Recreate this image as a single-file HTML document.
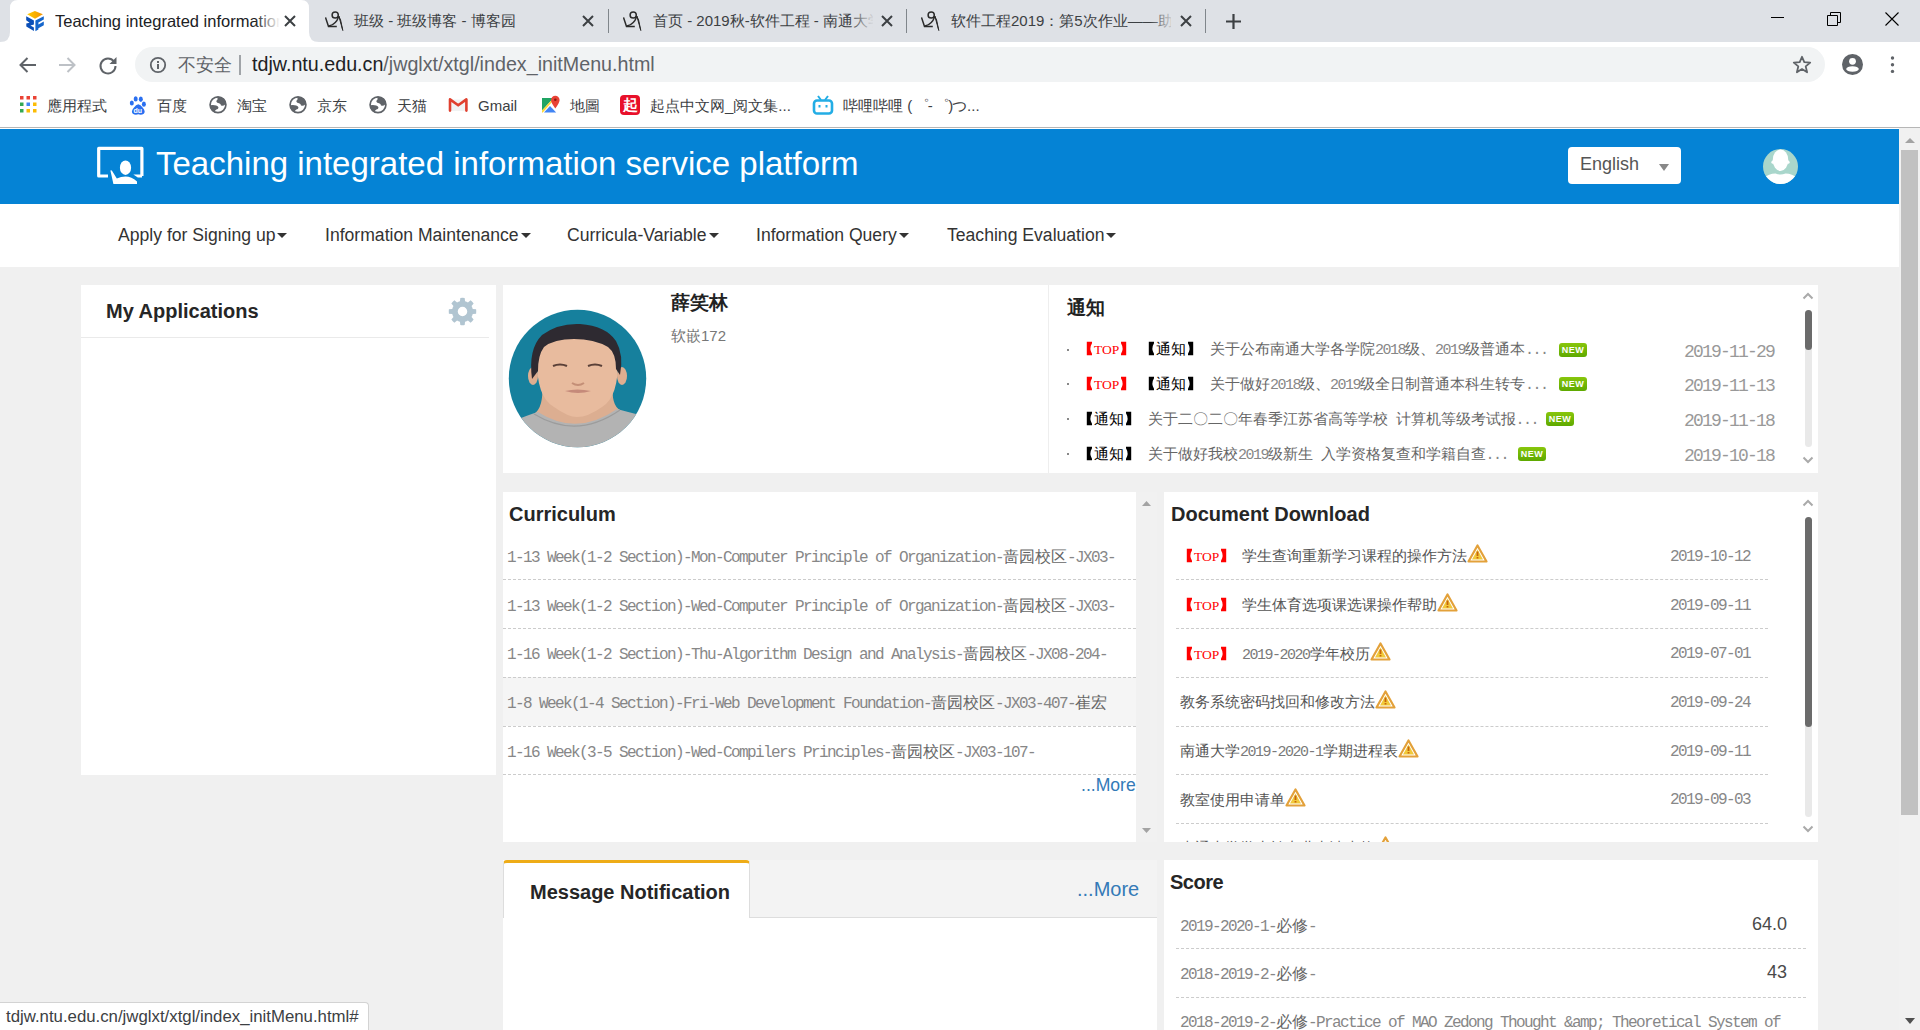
<!DOCTYPE html>
<html><head><meta charset="utf-8">
<style>
*{box-sizing:border-box;margin:0;padding:0}
html,body{width:1920px;height:1030px;overflow:hidden;background:#fff;font-family:"Liberation Sans",sans-serif}
.a{position:absolute;white-space:nowrap}
#tabbar{position:absolute;left:0;top:0;width:1920px;height:42px;background:#dee1e6}
#toolbar{position:absolute;left:0;top:42px;width:1920px;height:44px;background:#fff}
#bmbar{position:absolute;left:0;top:86px;width:1920px;height:41px;background:#fff}
#sep{position:absolute;left:0;top:127px;width:1920px;height:1px;background:#b6b6b6}
#content{position:absolute;left:0;top:128px;width:1920px;height:902px;background:#f0f0f0;overflow:hidden}
.tabt{font-size:15px;color:#3c4043;top:12px}
.bmt{font-size:15px;color:#3c4043;top:11px}
.card{position:absolute;background:#fff}
.ttl{position:absolute;font-weight:bold;font-size:20px;color:#262626;white-space:nowrap}
.mono{font-family:"Liberation Mono",monospace}
.dash{position:absolute;height:1px;border-top:1px dashed #ccc}
.nav{top:97px;font-size:17.6px;color:#333}
.car{display:inline-block;width:0;height:0;border-left:5px solid transparent;border-right:5px solid transparent;border-top:5px solid #333;vertical-align:middle;margin-left:2px;margin-top:-1px}
.ss{font-size:15px;line-height:15px}
.ss16{font-size:16px;line-height:16px}
.h{font-family:"Liberation Mono",monospace;letter-spacing:-0.1em}
.red{color:#f00}.blk{color:#000}
.newb{width:28px;height:14px;border-radius:3px;background:linear-gradient(#88c60c,#5ea900);color:#fff;font-size:9px;line-height:14px;font-weight:bold;text-align:center;letter-spacing:0.5px}
.warn{display:inline-block;width:21px;height:19px;vertical-align:top;margin-top:-4px}
.br{display:inline-block;vertical-align:top;fill:currentColor}
.tp{font-family:"Liberation Serif",serif;font-size:13.5px;letter-spacing:0px}
.ss .h,.ss16 .h{opacity:.78}
</style></head><body>

<div id="tabbar">
 <svg class="a" style="left:0;top:0" width="330" height="42">
  <path d="M0 42 Q10 42 10 32 L10 8 Q10 0 18 0 L301 0 Q309 0 309 8 L309 32 Q309 42 319 42 Z" fill="#fff"/>
 </svg>
 <svg class="a" style="left:20px;top:6px" width="32" height="30" viewBox="0 0 32 30">
  <defs><linearGradient id="fy" x1="0" x2="1"><stop offset="0" stop-color="#ffcc00"/><stop offset="1" stop-color="#f39200"/></linearGradient></defs>
  <path d="M7.2 8.3 L14.9 5 L22.9 8.3 L15 12.8 Z" fill="url(#fy)"/>
  <path d="M6.2 10.2 L13.9 14.4 L13.9 18.5 L10.4 19.6 L13.9 21.6 L13.9 25 L6.3 20.6 L6.3 17.6 L9.6 16.8 L6.2 14.2 Z" fill="#0a4fb8"/>
  <path d="M15.4 14.6 L23.8 10.2 L23.8 13.6 L18.4 16.6 L18.4 18.6 L23.8 15.6 L23.8 19.2 L18.4 22.2 L18.4 23.6 L15.4 25.2 Z" fill="#1566cc"/>
 </svg>
 <div class="a tabt" style="left:55px;width:225px;overflow:hidden;color:#202124;font-size:16.5px;top:12px">Teaching integrated information service platform</div>
 <div class="a" style="left:255px;top:8px;width:25px;height:28px;background:linear-gradient(to right,rgba(255,255,255,0),#fff)"></div>
 <svg class="a" style="left:283px;top:14px" width="14" height="14"><path d="M2 2 L12 12 M12 2 L2 12" stroke="#3c4043" stroke-width="2"/></svg>

 <svg class="a cnb" style="left:325px;top:11px" width="20" height="20" viewBox="0 0 20 20"><circle cx="10.2" cy="4" r="3.1" stroke="#2b2b2b" stroke-width="1.5" fill="none"/><path d="M0.5 6.4 L3.5 15.6 L11.8 15.5" stroke="#2b2b2b" stroke-width="1.5" fill="none"/><path d="M4 15 Q11 13.5 13.8 5.5" stroke="#2b2b2b" stroke-width="1.4" fill="none"/><path d="M13.8 5 L17.8 19.5 L15.6 9 Z" fill="#2b2b2b" stroke="#2b2b2b" stroke-width="1"/></svg>
 <div class="a tabt" style="left:354px">班级 - 班级博客 - 博客园</div>
 <svg class="a" style="left:581px;top:14px" width="14" height="14"><path d="M2 2 L12 12 M12 2 L2 12" stroke="#3c4043" stroke-width="2"/></svg>
 <div class="a" style="left:608px;top:9px;width:1px;height:24px;background:#80868b"></div>

 <svg class="a cnb" style="left:623px;top:11px" width="20" height="20" viewBox="0 0 20 20"><circle cx="10.2" cy="4" r="3.1" stroke="#2b2b2b" stroke-width="1.5" fill="none"/><path d="M0.5 6.4 L3.5 15.6 L11.8 15.5" stroke="#2b2b2b" stroke-width="1.5" fill="none"/><path d="M4 15 Q11 13.5 13.8 5.5" stroke="#2b2b2b" stroke-width="1.4" fill="none"/><path d="M13.8 5 L17.8 19.5 L15.6 9 Z" fill="#2b2b2b" stroke="#2b2b2b" stroke-width="1"/></svg>
 <div class="a tabt" style="left:653px;width:220px;overflow:hidden">首页 - 2019秋-软件工程 - 南通大学</div>
 <div class="a" style="left:850px;top:8px;width:25px;height:28px;background:linear-gradient(to right,rgba(222,225,230,0),#dee1e6)"></div>
 <svg class="a" style="left:880px;top:14px" width="14" height="14"><path d="M2 2 L12 12 M12 2 L2 12" stroke="#3c4043" stroke-width="2"/></svg>
 <div class="a" style="left:906px;top:9px;width:1px;height:24px;background:#80868b"></div>

 <svg class="a cnb" style="left:921px;top:11px" width="20" height="20" viewBox="0 0 20 20"><circle cx="10.2" cy="4" r="3.1" stroke="#2b2b2b" stroke-width="1.5" fill="none"/><path d="M0.5 6.4 L3.5 15.6 L11.8 15.5" stroke="#2b2b2b" stroke-width="1.5" fill="none"/><path d="M4 15 Q11 13.5 13.8 5.5" stroke="#2b2b2b" stroke-width="1.4" fill="none"/><path d="M13.8 5 L17.8 19.5 L15.6 9 Z" fill="#2b2b2b" stroke="#2b2b2b" stroke-width="1"/></svg>
 <div class="a tabt" style="left:951px;width:220px;overflow:hidden">软件工程2019：第5次作业——助教</div>
 <div class="a" style="left:1150px;top:8px;width:25px;height:28px;background:linear-gradient(to right,rgba(222,225,230,0),#dee1e6)"></div>
 <svg class="a" style="left:1179px;top:14px" width="14" height="14"><path d="M2 2 L12 12 M12 2 L2 12" stroke="#3c4043" stroke-width="2"/></svg>
 <div class="a" style="left:1205px;top:9px;width:1px;height:24px;background:#80868b"></div>
 <svg class="a" style="left:1225px;top:13px" width="17" height="17"><path d="M8.5 1 V16 M1 8.5 H16" stroke="#3c4043" stroke-width="2.2"/></svg>

 <div class="a" style="left:1771px;top:17px;width:13px;height:1px;background:#000"></div>
 <svg class="a" style="left:1826px;top:11px" width="16" height="16"><path d="M1.5 4.5 H11.5 V14.5 H1.5 Z M4.5 4.5 V1.5 H14.5 V11.5 H11.5" stroke="#000" stroke-width="1" fill="none"/></svg>
 <svg class="a" style="left:1884px;top:11px" width="16" height="16"><path d="M1.5 1.5 L14.5 14.5 M14.5 1.5 L1.5 14.5" stroke="#000" stroke-width="1.1"/></svg>
</div>
<div id="toolbar">
 <svg class="a" style="left:18px;top:14px" width="20" height="18"><path d="M18 9 H3 M9.5 2 L2.5 9 L9.5 16" stroke="#5f6368" stroke-width="2" fill="none"/></svg>
 <svg class="a" style="left:58px;top:14px" width="20" height="18"><path d="M1 9 H16 M9.5 2 L16.5 9 L9.5 16" stroke="#bdc1c6" stroke-width="2" fill="none"/></svg>
 <svg class="a" style="left:97px;top:12px" width="22" height="22"><path d="M17 7.5 A7.5 7.5 0 1 0 18.5 12" stroke="#5f6368" stroke-width="2" fill="none"/><path d="M19.5 3 V10 H12.5 Z" fill="#5f6368"/></svg>
 <div class="a" style="left:135px;top:5px;width:1690px;height:35px;border-radius:18px;background:#f1f3f4"></div>
 <svg class="a" style="left:149px;top:14px" width="18" height="18"><circle cx="9" cy="9" r="7.2" stroke="#5f6368" stroke-width="1.8" fill="none"/><rect x="8" y="8" width="2" height="5" fill="#5f6368"/><rect x="8" y="5" width="2" height="2" fill="#5f6368"/></svg>
 <div class="a" style="left:178px;top:11px;font-size:18px;color:#5f6368">不安全</div>
 <div class="a" style="left:239px;top:13px;width:2px;height:20px;background:#a0a4a8"></div>
 <div class="a" id="url" style="left:252px;top:11px;font-size:19.7px;color:#202124">tdjw.ntu.edu.cn<span style="color:#5f6368">/jwglxt/xtgl/index_initMenu.html</span></div>
 <svg class="a" style="left:1792px;top:13px" width="20" height="20" viewBox="0 0 20 20"><path d="M10 1.8 L12.3 7.2 L18.2 7.6 L13.7 11.4 L15.1 17.3 L10 14.1 L4.9 17.3 L6.3 11.4 L1.8 7.6 L7.7 7.2 Z" stroke="#5f6368" stroke-width="1.8" fill="none" stroke-linejoin="round"/></svg>
 <svg class="a" style="left:1841px;top:11px" width="23" height="23"><circle cx="11.5" cy="11.5" r="10.5" fill="#5f6368"/><circle cx="11.5" cy="8.3" r="3.4" fill="#fff"/><ellipse cx="11.5" cy="16" rx="6.3" ry="2.8" fill="#fff"/></svg>
 <svg class="a" style="left:1888px;top:13px" width="8" height="20"><circle cx="4.5" cy="3" r="1.7" fill="#5f6368"/><circle cx="4.5" cy="9.7" r="1.7" fill="#5f6368"/><circle cx="4.5" cy="16.4" r="1.7" fill="#5f6368"/></svg>
</div>
<div id="bmbar">
 <svg class="a" style="left:20px;top:10px" width="17" height="17">
  <rect x="0" y="0" width="3.5" height="3.5" fill="#ea4335"/><rect x="6.5" y="0" width="3.5" height="3.5" fill="#ea4335"/><rect x="13" y="0" width="3.5" height="3.5" fill="#ea4335"/>
  <rect x="0" y="6.5" width="3.5" height="3.5" fill="#34a853"/><rect x="6.5" y="6.5" width="3.5" height="3.5" fill="#4285f4"/><rect x="13" y="6.5" width="3.5" height="3.5" fill="#fbbc05"/>
  <rect x="0" y="13" width="3.5" height="3.5" fill="#34a853"/><rect x="6.5" y="13" width="3.5" height="3.5" fill="#fbbc05"/><rect x="13" y="13" width="3.5" height="3.5" fill="#fbbc05"/>
 </svg>
 <div class="a bmt" style="left:47px">應用程式</div>
 <svg class="a" style="left:129px;top:9px" width="18" height="21" viewBox="0 0 18 21"><ellipse cx="2.8" cy="8" rx="2" ry="2.6" fill="#2a6ff0"/><ellipse cx="6.7" cy="3.9" rx="2" ry="2.7" fill="#2a6ff0"/><ellipse cx="11.8" cy="4.3" rx="2" ry="2.7" fill="#2a6ff0"/><ellipse cx="14.9" cy="9.2" rx="2" ry="2.6" fill="#2a6ff0"/><path d="M9.3 9.2 Q11.5 9.6 13.8 12.8 Q17 16.6 14.8 18.8 Q12.4 20.2 9.3 19.3 Q6.2 20.2 3.8 18.8 Q1.6 16.6 4.8 12.8 Q7 9.6 9.3 9.2 Z" fill="#2a6ff0"/><text x="4.6" y="18" font-size="7" fill="#fff" font-family="Liberation Sans" font-weight="bold">du</text></svg>
 <div class="a bmt" style="left:157px">百度</div>
 <svg class="a glb" style="left:209px;top:10px" width="18" height="18" viewBox="0 0 18 18"><circle cx="9" cy="8.8" r="7.9" stroke="#5f6368" stroke-width="1.7" fill="#fff"/><path d="M8.2 1 Q8.8 2.5 8.4 3.8 Q7.2 4.2 7.4 5.8 Q8 7.2 10 7.2 Q11.8 7.6 12 9.6 Q14.5 10.2 16.5 8.2 Q17 3 12 1.2 Z" fill="#5f6368"/><path d="M1 9.2 Q4.5 8.6 7.2 9.4 Q9.6 10.2 9.5 11.8 Q9.2 13.4 7.4 13.6 Q5.6 14 6 16.6 Q1.4 14.6 1 9.2 Z" fill="#5f6368"/></svg>
 <div class="a bmt" style="left:237px">淘宝</div>
 <svg class="a glb" style="left:289px;top:10px" width="18" height="18" viewBox="0 0 18 18"><circle cx="9" cy="8.8" r="7.9" stroke="#5f6368" stroke-width="1.7" fill="#fff"/><path d="M8.2 1 Q8.8 2.5 8.4 3.8 Q7.2 4.2 7.4 5.8 Q8 7.2 10 7.2 Q11.8 7.6 12 9.6 Q14.5 10.2 16.5 8.2 Q17 3 12 1.2 Z" fill="#5f6368"/><path d="M1 9.2 Q4.5 8.6 7.2 9.4 Q9.6 10.2 9.5 11.8 Q9.2 13.4 7.4 13.6 Q5.6 14 6 16.6 Q1.4 14.6 1 9.2 Z" fill="#5f6368"/></svg>
 <div class="a bmt" style="left:317px">京东</div>
 <svg class="a glb" style="left:369px;top:10px" width="18" height="18" viewBox="0 0 18 18"><circle cx="9" cy="8.8" r="7.9" stroke="#5f6368" stroke-width="1.7" fill="#fff"/><path d="M8.2 1 Q8.8 2.5 8.4 3.8 Q7.2 4.2 7.4 5.8 Q8 7.2 10 7.2 Q11.8 7.6 12 9.6 Q14.5 10.2 16.5 8.2 Q17 3 12 1.2 Z" fill="#5f6368"/><path d="M1 9.2 Q4.5 8.6 7.2 9.4 Q9.6 10.2 9.5 11.8 Q9.2 13.4 7.4 13.6 Q5.6 14 6 16.6 Q1.4 14.6 1 9.2 Z" fill="#5f6368"/></svg>
 <div class="a bmt" style="left:397px">天猫</div>
 <svg class="a" style="left:448px;top:11px" width="20" height="16" viewBox="0 0 20 16"><rect x="2" y="2.5" width="16.4" height="11.5" fill="#f1f3f3"/><path d="M2 13.6 V2.4 L10.2 8.3 L18.4 2.4 V13.6" stroke="#e0402f" stroke-width="2.6" fill="none" stroke-linecap="round" stroke-linejoin="round"/></svg>
 <div class="a bmt" style="left:478px">Gmail</div>
 <svg class="a" style="left:541px;top:9px" width="20" height="20" viewBox="0 0 20 20"><path d="M1 3 H12.5 L1 15.6 Z" fill="#1fa463"/><path d="M1 15.6 L12.5 3 H14.5 L1.8 17.6 H1 Z" fill="#fdd835"/><path d="M3 17.6 L9 11 L15.2 17.6 Z" fill="#4285f4"/><path d="M14.3 0.8 A4.3 4.3 0 0 1 18.6 5.1 Q18.6 7.6 14.3 13.6 Q10 7.6 10 5.1 A4.3 4.3 0 0 1 14.3 0.8 Z" fill="#e94235"/><circle cx="14.3" cy="4.8" r="1.3" fill="#8c1a10"/></svg>
 <div class="a bmt" style="left:570px">地圖</div>
 <div class="a" style="left:620px;top:9px;width:20px;height:20px;border-radius:4px;background:#e8102a;color:#fff;font-size:15px;line-height:20px;text-align:center;font-weight:bold">起</div>
 <div class="a bmt" style="left:650px">起点中文网_阅文集...</div>
 <svg class="a" style="left:812px;top:9px" width="22" height="21" viewBox="0 0 22 21"><path d="M6 1 L9 5 M16 1 L13 5" stroke="#23ade5" stroke-width="2"/><rect x="2" y="5.5" width="18" height="13" rx="3" stroke="#23ade5" stroke-width="2.6" fill="none"/><rect x="6.5" y="10" width="2" height="2.5" fill="#23ade5"/><rect x="13.5" y="10" width="2" height="2.5" fill="#23ade5"/></svg>
 <div class="a bmt" style="left:843px">哔哩哔哩 <span style="letter-spacing:-1.2px">( ゜- ゜)</span>つ...</div>
</div>

<div id="sep"></div>

<div id="content">
 <!-- header (coords relative to content top=128) -->
 <div class="a" style="left:0;top:0;width:1899px;height:1px;background:#fff"></div>
 <div class="a" style="left:0;top:1px;width:1899px;height:75px;background:#0583d5"></div>
 <svg class="a" style="left:96px;top:18px" width="49" height="39" viewBox="0 0 49 39">
  <path d="M12 30 H2.7 V2.4 H45.9 V30" stroke="#fff" stroke-width="3.2" fill="none" stroke-linejoin="round"/><path d="M37.3 28.4 H46 V31.6 H41.8 Z" fill="#fff"/>
  <ellipse cx="29.5" cy="21.7" rx="5.6" ry="7.3" fill="#fff"/>
  <path d="M14.4 24.4 Q15.5 23.8 16 24.8 L20.8 32.6 Q25 30.6 29.5 30.6 Q35.5 30.6 41 35.6 V38 H17.4 Z" fill="#fff"/>
 </svg>
 <div class="a" id="htitle" style="left:156px;top:17px;font-size:33px;color:#fff">Teaching integrated information service platform</div>
 <div class="a" style="left:1568px;top:19px;width:113px;height:37px;border-radius:4px;background:#fff"></div>
 <div class="a" style="left:1580px;top:26px;font-size:18px;color:#555">English</div>
 <svg class="a" style="left:1659px;top:36px" width="10" height="7"><path d="M0 0 H10 L5 7 Z" fill="#888"/></svg>
 <svg class="a" style="left:1763px;top:20px" width="35" height="37" viewBox="0 0 35 37">
  <defs><clipPath id="avc"><circle cx="17.5" cy="18.5" r="17.5"/></clipPath></defs>
  <circle cx="17.5" cy="18.5" r="17.5" fill="#a9d6cb"/>
  <g clip-path="url(#avc)" fill="#fff">
   <ellipse cx="17.5" cy="12.2" rx="7.8" ry="10.8"/>
   <ellipse cx="9.8" cy="14.2" rx="1.4" ry="1.6"/><ellipse cx="25.2" cy="14.2" rx="1.4" ry="1.6"/>
   <path d="M0 30 Q6 25.6 12.5 25.4 Q15 26.4 17.5 26.4 Q20 26.4 22.5 25.4 Q29 25.6 35 30 V40 H0 Z"/>
  </g>
 </svg>

 <!-- nav -->
 <div class="a" style="left:0;top:76px;width:1899px;height:63px;background:#fff"></div>
 <div class="a nav" style="left:118px">Apply for Signing up<b class="car"></b></div>
 <div class="a nav" style="left:325px">Information Maintenance<b class="car"></b></div>
 <div class="a nav" style="left:567px">Curricula-Variable<b class="car"></b></div>
 <div class="a nav" style="left:756px">Information Query<b class="car"></b></div>
 <div class="a nav" style="left:947px">Teaching Evaluation<b class="car"></b></div>

 <!-- My Applications -->
 <div class="card" style="left:81px;top:157px;width:415px;height:490px"></div>
 <div class="ttl" style="left:106px;top:172px">My Applications</div>
 <div class="a" style="left:81px;top:209px;width:408px;height:1px;background:#eaeaea"></div>
 <svg class="a" style="left:448px;top:169px" width="29" height="29" viewBox="0 0 28 28">
  <path fill="#b1c5d1" fill-rule="evenodd" d="M11.53 4.10 L11.92 0.86 A13.30 13.30 0 0 1 16.08 0.86 L16.47 4.10 A10.20 10.20 0 0 1 19.25 5.26 L21.82 3.24 A13.30 13.30 0 0 1 24.76 6.18 L22.74 8.75 A10.20 10.20 0 0 1 23.90 11.53 L27.14 11.92 A13.30 13.30 0 0 1 27.14 16.08 L23.90 16.47 A10.20 10.20 0 0 1 22.74 19.25 L24.76 21.82 A13.30 13.30 0 0 1 21.82 24.76 L19.25 22.74 A10.20 10.20 0 0 1 16.47 23.90 L16.08 27.14 A13.30 13.30 0 0 1 11.92 27.14 L11.53 23.90 A10.20 10.20 0 0 1 8.75 22.74 L6.18 24.76 A13.30 13.30 0 0 1 3.24 21.82 L5.26 19.25 A10.20 10.20 0 0 1 4.10 16.47 L0.86 16.08 A13.30 13.30 0 0 1 0.86 11.92 L4.10 11.53 A10.20 10.20 0 0 1 5.26 8.75 L3.24 6.18 A13.30 13.30 0 0 1 6.18 3.24 L8.75 5.26 A10.20 10.20 0 0 1 11.53 4.10 Z M18.60 14.00 A4.60 4.60 0 1 0 9.40 14.00 A4.60 4.60 0 1 0 18.60 14.00 Z"/>
 </svg>

 <!-- Profile card -->
 <div class="card" style="left:503px;top:157px;width:1315px;height:188px"></div>
 <div class="a" style="left:1048px;top:157px;width:1px;height:188px;background:#eee"></div>
 <svg class="a" style="left:508px;top:181px" width="139" height="139" viewBox="0 0 139 139">
  <defs><clipPath id="phc"><circle cx="69.5" cy="69.5" r="68.7"/></clipPath></defs>
  <circle cx="69.5" cy="69.5" r="68.7" fill="#16809d"/>
  <g clip-path="url(#phc)">
   <path d="M34 75 Q36 98 26 105 Q69 131 112 101 Q103 96 105 75 Z" fill="#dcae91"/>
   <path d="M0 139 V112 L13 109 Q26 104 30 103 Q69 128 109 100 Q120 103 128 105 L139 110 V139 Z" fill="#b3b3b3"/>
   <path d="M26 105 Q69 131 112 101" stroke="#9c9c9c" stroke-width="1.2" fill="none"/>
   <ellipse cx="25" cy="67" rx="5" ry="9" fill="#dfae90"/>
   <ellipse cx="114" cy="67" rx="5" ry="9" fill="#dfae90"/>
   <path d="M29 48 Q28 88 46 98 Q60 108 69 108 Q80 108 94 98 Q111 88 110 48 Q108 24 69 22 Q31 24 29 48 Z" fill="#e8bb9e"/>
   <path d="M24 70 Q20 40 34 26 Q50 14 72 15 Q98 17 108 32 Q116 46 112 66 L108 60 Q108 44 100 38 Q86 30 66 30 Q46 30 36 38 Q30 46 30 62 Z" fill="#2e2a31"/>
   <path d="M45 57 Q52 54 59 57" stroke="#5a4038" stroke-width="2.2" fill="none"/>
   <path d="M80 57 Q87 54 94 57" stroke="#5a4038" stroke-width="2.2" fill="none"/>
   <path d="M64 74 Q70 78 76 74" stroke="#c48f77" stroke-width="2" fill="none"/>
   <path d="M57 82 Q69 79 83 82 Q70 86 57 82 Z" fill="#c58a7a"/>
  </g>
 </svg>
 <div class="a" style="left:671px;top:162px;font-size:18.5px;font-weight:bold;color:#222">薛笑林</div>
 <div class="a" style="left:671px;top:199px;font-size:15px;color:#777">软嵌172</div>

 <!-- notices -->
 <div class="a" style="left:1067px;top:167px;font-size:19px;font-weight:bold;color:#222">通知</div>
 <div id="notices"><div class="a" style="left:1067px;top:220.8px;width:2px;height:2px;background:#888"></div><div class="a ss red" style="left:1079px;top:213.3px"><svg class="br" width="15" height="15"><path d="M7.8 0.8 H13 V2.2 Q9.8 7.5 13 12.8 V14.2 H7.8 Z"/></svg><span class="tp">TOP</span><svg class="br" width="15" height="15"><path d="M2 0.8 H7.2 V14.2 H2 V12.8 Q5.2 7.5 2 2.2 Z"/></svg></div><div class="a ss blk" style="left:1141px;top:213.3px"><svg class="br" width="15" height="15"><path d="M7.8 0.8 H13 V2.2 Q9.8 7.5 13 12.8 V14.2 H7.8 Z"/></svg>通知<svg class="br" width="15" height="15"><path d="M2 0.8 H7.2 V14.2 H2 V12.8 Q5.2 7.5 2 2.2 Z"/></svg></div><div class="a ss" style="left:1210px;top:213.3px;color:#666">关于公布南通大学各学院<span class="h">2018</span>级、<span class="h">2019</span>级普通本<span class="h">...</span></div><div class="a newb" style="left:1559px;top:214.8px">NEW</div><div class="a ss h" style="left:1684px;top:214.8px;font-size:18px;line-height:18px;color:#999">2019-11-29</div><div class="a" style="left:1067px;top:255.0px;width:2px;height:2px;background:#888"></div><div class="a ss red" style="left:1079px;top:247.5px"><svg class="br" width="15" height="15"><path d="M7.8 0.8 H13 V2.2 Q9.8 7.5 13 12.8 V14.2 H7.8 Z"/></svg><span class="tp">TOP</span><svg class="br" width="15" height="15"><path d="M2 0.8 H7.2 V14.2 H2 V12.8 Q5.2 7.5 2 2.2 Z"/></svg></div><div class="a ss blk" style="left:1141px;top:247.5px"><svg class="br" width="15" height="15"><path d="M7.8 0.8 H13 V2.2 Q9.8 7.5 13 12.8 V14.2 H7.8 Z"/></svg>通知<svg class="br" width="15" height="15"><path d="M2 0.8 H7.2 V14.2 H2 V12.8 Q5.2 7.5 2 2.2 Z"/></svg></div><div class="a ss" style="left:1210px;top:247.5px;color:#666">关于做好<span class="h">2018</span>级、<span class="h">2019</span>级全日制普通本科生转专<span class="h">...</span></div><div class="a newb" style="left:1559px;top:249.0px">NEW</div><div class="a ss h" style="left:1684px;top:249.0px;font-size:18px;line-height:18px;color:#999">2019-11-13</div><div class="a" style="left:1067px;top:290.0px;width:2px;height:2px;background:#888"></div><div class="a ss blk" style="left:1079px;top:282.5px"><svg class="br" width="15" height="15"><path d="M7.8 0.8 H13 V2.2 Q9.8 7.5 13 12.8 V14.2 H7.8 Z"/></svg>通知<svg class="br" width="15" height="15"><path d="M2 0.8 H7.2 V14.2 H2 V12.8 Q5.2 7.5 2 2.2 Z"/></svg></div><div class="a ss" style="left:1148px;top:282.5px;color:#666">关于二〇二〇年春季江苏省高等学校<span class="h"> </span>计算机等级考试报<span class="h">...</span></div><div class="a newb" style="left:1546px;top:284.0px">NEW</div><div class="a ss h" style="left:1684px;top:284.0px;font-size:18px;line-height:18px;color:#999">2019-11-18</div><div class="a" style="left:1067px;top:325.0px;width:2px;height:2px;background:#888"></div><div class="a ss blk" style="left:1079px;top:317.5px"><svg class="br" width="15" height="15"><path d="M7.8 0.8 H13 V2.2 Q9.8 7.5 13 12.8 V14.2 H7.8 Z"/></svg>通知<svg class="br" width="15" height="15"><path d="M2 0.8 H7.2 V14.2 H2 V12.8 Q5.2 7.5 2 2.2 Z"/></svg></div><div class="a ss" style="left:1148px;top:317.5px;color:#666">关于做好我校<span class="h">2019</span>级新生<span class="h"> </span>入学资格复查和学籍自查<span class="h">...</span></div><div class="a newb" style="left:1518px;top:319.0px">NEW</div><div class="a ss h" style="left:1684px;top:319.0px;font-size:18px;line-height:18px;color:#999">2019-10-18</div><svg class="a" style="left:1802px;top:164px" width="12" height="8"><path d="M1.5 6.5 L6 2 L10.5 6.5" stroke="#aaa" stroke-width="2" fill="none"/></svg><div class="a" style="left:1805px;top:182px;width:7px;height:137px;border-radius:4px;background:#e9e9e9"></div><div class="a" style="left:1805px;top:182px;width:7px;height:40px;border-radius:4px;background:#6b6b6b"></div><svg class="a" style="left:1802px;top:328px" width="12" height="8"><path d="M1.5 1.5 L6 6 L10.5 1.5" stroke="#aaa" stroke-width="2" fill="none"/></svg></div><!--/n-->

 <!-- curriculum -->
 <div class="card" style="left:503px;top:364px;width:633px;height:350px"></div>
 <div class="a" style="left:1136px;top:364px;width:21px;height:350px;background:#f1f1f1"></div>
 <svg class="a" style="left:1142px;top:373px" width="9" height="5"><path d="M0 5 H9 L4.5 0 Z" fill="#a3a3a3"/></svg>
 <svg class="a" style="left:1142px;top:700px" width="9" height="5"><path d="M0 0 H9 L4.5 5 Z" fill="#a3a3a3"/></svg>
 <div class="ttl" style="left:509px;top:375px">Curriculum</div>
 <div id="curr"><div class="a" style="left:503px;top:549px;width:633px;height:49px;background:#f5f5f5"></div><div class="a ss16" style="left:507px;top:420.5px;color:#666"><span class="h">1-13 Week(1-2 Section)-Mon-Computer Principle of Organization-</span>啬园校区<span class="h">-JX03-</span></div><div class="a ss16" style="left:507px;top:469.8px;color:#666"><span class="h">1-13 Week(1-2 Section)-Wed-Computer Principle of Organization-</span>啬园校区<span class="h">-JX03-</span></div><div class="a ss16" style="left:507px;top:518.3px;color:#666"><span class="h">1-16 Week(1-2 Section)-Thu-Algorithm Design and Analysis-</span>啬园校区<span class="h">-JX08-204-</span></div><div class="a ss16" style="left:507px;top:566.8px;color:#666"><span class="h">1-8 Week(1-4 Section)-Fri-Web Development Foundation-</span>啬园校区<span class="h">-JX03-407-</span>崔宏</div><div class="a ss16" style="left:507px;top:616.0px;color:#666"><span class="h">1-16 Week(3-5 Section)-Wed-Compilers Principles-</span>啬园校区<span class="h">-JX03-107-</span></div><div class="dash" style="left:503px;top:451px;width:633px"></div><div class="dash" style="left:503px;top:500px;width:633px"></div><div class="dash" style="left:503px;top:549px;width:633px"></div><div class="dash" style="left:503px;top:598px;width:633px"></div><div class="dash" style="left:503px;top:646px;width:633px"></div></div><!--/c-->
 <div class="a" style="left:1081px;top:647px;font-size:17.6px;color:#337ab7">...More</div>

 <!-- doc download -->
 <div class="card" style="left:1164px;top:364px;width:654px;height:350px;overflow:hidden" id="doc"><div class="a ss red" style="left:15px;top:56.0px"><svg class="br" width="15" height="15"><path d="M7.8 0.8 H13 V2.2 Q9.8 7.5 13 12.8 V14.2 H7.8 Z"/></svg><span class="tp">TOP</span><svg class="br" width="15" height="15"><path d="M2 0.8 H7.2 V14.2 H2 V12.8 Q5.2 7.5 2 2.2 Z"/></svg></div><div class="a ss" style="left:78px;top:56.0px;color:#555">学生查询重新学习课程的操作方法<svg class="warn" width="21" height="19"><path d="M10.5 1.5 L19.5 17.5 H1.5 Z" fill="#fff" stroke="#e3a13a" stroke-width="2.2" stroke-linejoin="round"/><path d="M10.5 5.5 L16 15.5 H5 Z" fill="#f1c93a"/><rect x="9.6" y="7.5" width="1.8" height="4.5" fill="#c8640c"/><rect x="9.6" y="13" width="1.8" height="1.5" fill="#c8640c"/></svg></div><div class="a ss16 h" style="left:506px;top:56.5px;color:#888">2019-10-12</div><div class="a ss red" style="left:15px;top:105.2px"><svg class="br" width="15" height="15"><path d="M7.8 0.8 H13 V2.2 Q9.8 7.5 13 12.8 V14.2 H7.8 Z"/></svg><span class="tp">TOP</span><svg class="br" width="15" height="15"><path d="M2 0.8 H7.2 V14.2 H2 V12.8 Q5.2 7.5 2 2.2 Z"/></svg></div><div class="a ss" style="left:78px;top:105.2px;color:#555">学生体育选项课选课操作帮助<svg class="warn" width="21" height="19"><path d="M10.5 1.5 L19.5 17.5 H1.5 Z" fill="#fff" stroke="#e3a13a" stroke-width="2.2" stroke-linejoin="round"/><path d="M10.5 5.5 L16 15.5 H5 Z" fill="#f1c93a"/><rect x="9.6" y="7.5" width="1.8" height="4.5" fill="#c8640c"/><rect x="9.6" y="13" width="1.8" height="1.5" fill="#c8640c"/></svg></div><div class="a ss16 h" style="left:506px;top:105.7px;color:#888">2019-09-11</div><div class="a ss red" style="left:15px;top:153.5px"><svg class="br" width="15" height="15"><path d="M7.8 0.8 H13 V2.2 Q9.8 7.5 13 12.8 V14.2 H7.8 Z"/></svg><span class="tp">TOP</span><svg class="br" width="15" height="15"><path d="M2 0.8 H7.2 V14.2 H2 V12.8 Q5.2 7.5 2 2.2 Z"/></svg></div><div class="a ss" style="left:78px;top:153.5px;color:#555"><span class="h">2019-2020</span>学年校历<svg class="warn" width="21" height="19"><path d="M10.5 1.5 L19.5 17.5 H1.5 Z" fill="#fff" stroke="#e3a13a" stroke-width="2.2" stroke-linejoin="round"/><path d="M10.5 5.5 L16 15.5 H5 Z" fill="#f1c93a"/><rect x="9.6" y="7.5" width="1.8" height="4.5" fill="#c8640c"/><rect x="9.6" y="13" width="1.8" height="1.5" fill="#c8640c"/></svg></div><div class="a ss16 h" style="left:506px;top:154.0px;color:#888">2019-07-01</div><div class="a ss" style="left:16px;top:202.2px;color:#555">教务系统密码找回和修改方法<svg class="warn" width="21" height="19"><path d="M10.5 1.5 L19.5 17.5 H1.5 Z" fill="#fff" stroke="#e3a13a" stroke-width="2.2" stroke-linejoin="round"/><path d="M10.5 5.5 L16 15.5 H5 Z" fill="#f1c93a"/><rect x="9.6" y="7.5" width="1.8" height="4.5" fill="#c8640c"/><rect x="9.6" y="13" width="1.8" height="1.5" fill="#c8640c"/></svg></div><div class="a ss16 h" style="left:506px;top:202.7px;color:#888">2019-09-24</div><div class="a ss" style="left:16px;top:251.0px;color:#555">南通大学<span class="h">2019-2020-1</span>学期进程表<svg class="warn" width="21" height="19"><path d="M10.5 1.5 L19.5 17.5 H1.5 Z" fill="#fff" stroke="#e3a13a" stroke-width="2.2" stroke-linejoin="round"/><path d="M10.5 5.5 L16 15.5 H5 Z" fill="#f1c93a"/><rect x="9.6" y="7.5" width="1.8" height="4.5" fill="#c8640c"/><rect x="9.6" y="13" width="1.8" height="1.5" fill="#c8640c"/></svg></div><div class="a ss16 h" style="left:506px;top:251.5px;color:#888">2019-09-11</div><div class="a ss" style="left:16px;top:299.5px;color:#555">教室使用申请单<svg class="warn" width="21" height="19"><path d="M10.5 1.5 L19.5 17.5 H1.5 Z" fill="#fff" stroke="#e3a13a" stroke-width="2.2" stroke-linejoin="round"/><path d="M10.5 5.5 L16 15.5 H5 Z" fill="#f1c93a"/><rect x="9.6" y="7.5" width="1.8" height="4.5" fill="#c8640c"/><rect x="9.6" y="13" width="1.8" height="1.5" fill="#c8640c"/></svg></div><div class="a ss16 h" style="left:506px;top:300.0px;color:#888">2019-09-03</div><div class="a ss" style="left:16px;top:348.0px;color:#555">南通大学学生转专业申请表格<svg class="warn" width="21" height="19"><path d="M10.5 1.5 L19.5 17.5 H1.5 Z" fill="#fff" stroke="#e3a13a" stroke-width="2.2" stroke-linejoin="round"/><path d="M10.5 5.5 L16 15.5 H5 Z" fill="#f1c93a"/><rect x="9.6" y="7.5" width="1.8" height="4.5" fill="#c8640c"/><rect x="9.6" y="13" width="1.8" height="1.5" fill="#c8640c"/></svg></div><div class="dash" style="left:12px;top:87px;width:592px"></div><div class="dash" style="left:12px;top:136px;width:592px"></div><div class="dash" style="left:12px;top:185px;width:592px"></div><div class="dash" style="left:12px;top:234px;width:592px"></div><div class="dash" style="left:12px;top:282px;width:592px"></div><div class="dash" style="left:12px;top:331px;width:592px"></div><div class="ttl" style="left:7px;top:11px">Document Download</div><svg class="a" style="left:638px;top:7px" width="12" height="8"><path d="M1.5 6.5 L6 2 L10.5 6.5" stroke="#aaa" stroke-width="2" fill="none"/></svg><div class="a" style="left:641px;top:25px;width:7px;height:300px;border-radius:4px;background:#e9e9e9"></div><div class="a" style="left:641px;top:25px;width:7px;height:210px;border-radius:4px;background:#6b6b6b"></div><svg class="a" style="left:638px;top:333px" width="12" height="8"><path d="M1.5 1.5 L6 6 L10.5 1.5" stroke="#aaa" stroke-width="2" fill="none"/></svg></div><!--/d-->

 <!-- message notification -->
 <div class="a" style="left:503px;top:732px;width:654px;height:170px;background:#fff"></div>
 <div class="a" style="left:749px;top:732px;width:408px;height:58px;background:#f3f3f3;border-bottom:1px solid #ddd"></div>
 <div class="a" style="left:503px;top:732px;width:247px;height:58px;background:#fff;border:1px solid #ddd;border-bottom:none;border-top:3px solid #eeac17;border-radius:4px 4px 0 0"></div>
 <div class="ttl" style="left:530px;top:753px">Message Notification</div>
 <div class="a" style="left:1077px;top:750px;font-size:20px;color:#337ab7">...More</div>

 <!-- score -->
 <div class="card" style="left:1164px;top:732px;width:654px;height:170px"></div>
 <div class="ttl" style="left:1170px;top:743px;letter-spacing:-0.5px">Score</div>
 <div id="score"><div class="a ss16" style="left:1180px;top:790.0px;color:#666"><span class="h">2019-2020-1-</span>必修<span class="h">-</span></div><div class="a" style="left:1687px;width:100px;text-align:right;top:787.0px;font-size:18px;line-height:18px;color:#4a4a4a">64.0</div><div class="a ss16" style="left:1180px;top:838.0px;color:#666"><span class="h">2018-2019-2-</span>必修<span class="h">-</span></div><div class="a" style="left:1687px;width:100px;text-align:right;top:835.0px;font-size:18px;line-height:18px;color:#4a4a4a">43</div><div class="a ss16" style="left:1180px;top:886.0px;color:#666"><span class="h">2018-2019-2-</span>必修<span class="h">-Practice of MAO Zedong Thought &amp;amp; Theoretical System of</span></div><div class="dash" style="left:1176px;top:820px;width:630px"></div><div class="dash" style="left:1176px;top:869px;width:630px"></div></div><!--/s-->

 <!-- page scrollbar -->
 <div class="a" style="left:1899px;top:0;width:21px;height:902px;background:#f1f1f1"></div>
 <svg class="a" style="left:1905px;top:10px" width="10" height="5"><path d="M0 5 H10 L5 0 Z" fill="#a3a3a3"/></svg>
 <div class="a" style="left:1901px;top:22px;width:17px;height:665px;background:#c1c1c1"></div>
 <svg class="a" style="left:1905px;top:890px" width="10" height="6"><path d="M0 0 H10 L5 6 Z" fill="#505050"/></svg>
</div>
<div class="a" style="left:0;top:1002px;width:369px;height:28px;background:#fff;border:1px solid #d3d3d3;border-left:none;border-bottom:none;border-radius:0 4px 0 0"></div>
<div class="a" style="left:6px;top:1007px;font-size:16.8px;color:#3c4043">tdjw.ntu.edu.cn/jwglxt/xtgl/index_initMenu.html#</div>

</body></html>
